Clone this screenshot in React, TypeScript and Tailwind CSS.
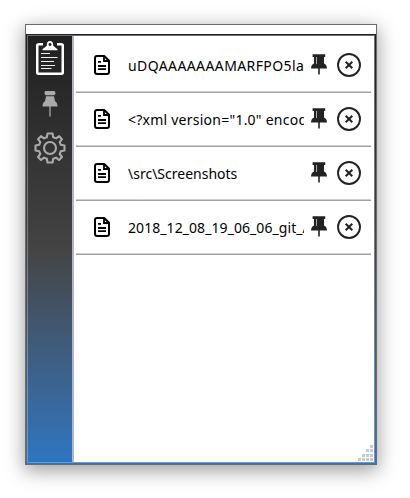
type Clip = { text: string; tracking: string };

const clips: Clip[] = [
  { text: 'uDQAAAAAAAMARFPO5la', tracking: 'tracking-[0.4px]' },
  { text: '<?xml version="1.0" encoding="utf-8"?>', tracking: 'tracking-[0.24px]' },
  { text: '\\src\\Screenshots', tracking: 'tracking-[0px]' },
  { text: '2018_12_08_19_06_06_git_Actions', tracking: 'tracking-[0.07px]' },
];

function ClipboardIcon() {
  return (
    <svg width="28" height="35" viewBox="0 0 28 35" className="block">
      <path d="M7 3.2H2.8Q1.2 3.2 1.2 4.8V31.2Q1.2 32.8 2.8 32.8H25.2Q26.8 32.8 26.8 31.2V4.8Q26.8 3.2 25.2 3.2H21" fill="none" stroke="#fff" strokeWidth="2.6" />
      <path fillRule="evenodd" d="M6.5 9.3V8.2L10.8 4.7Q10.5 0 14 0T17.2 4.7L21.5 8.2V9.3ZM14 2.1a1.5 1.5 0 1 0 .01 0Z" fill="#fff" />
      <path d="M5 12.5H14M5 16.5H21.5M5 20.5H18M5 24.5H19M5 27.5H15.5" stroke="#eee" strokeWidth="1.2" />
    </svg>
  );
}

function SidebarPin() {
  return (
    <svg width="16" height="26" viewBox="0 0 16 26" className="block">
      <path d="M4 0H12Q13.5 0 13.5 2T12 4.2H4Q2.5 4.2 2.5 2T4 0ZM4 5.2H12L13 10.2Q15.5 11.5 15.5 15.5H.5Q.5 11.5 3 10.2Z" fill="#aaa" />
      <path d="M8 15V25.5" stroke="#aaa" strokeWidth="1.3" />
    </svg>
  );
}

function Gear() {
  return (
    <svg width="32" height="32" viewBox="0 0 32 32" className="block" fill="none" stroke="#aaa" strokeWidth="2.1">
      <path strokeLinejoin="round" d="M13.5 1.5H18.5L19.2 5.2L22.1 6.4L25.2 4.2L28 7.2L25.7 10.1L26.8 12.8L30.5 13.5V18.5L26.8 19.2L25.7 22L28 25L25 28L22 25.6L19.2 26.8L18.5 30.5H13.5L12.8 26.8L10 25.6L7 28L4 25L6.3 22L5.2 19.2L1.5 18.5V13.5L5.2 12.8L6.3 10.1L4 7.2L7 4.2L10 6.4L12.8 5.2Z" />
      <circle cx="16" cy="16" r="6" />
    </svg>
  );
}

function DocIcon() {
  return (
    <svg width="16" height="20" viewBox="0 0 16 20" className="block shrink-0">
      <path d="M3 1H10.2L15 5.8V17Q15 19 13 19H3Q1 19 1 17V3Q1 1 3 1Z" fill="none" stroke="#000" strokeWidth="2" strokeLinejoin="round" />
      <path d="M10 1V6H15" fill="none" stroke="#000" strokeWidth="1.8" />
      <path d="M4 6.8H7M4 11H12M4 14.2H12" stroke="#000" strokeWidth="1.8" />
    </svg>
  );
}

function PinIcon() {
  return (
    <svg width="16" height="21" viewBox="0 0 16 21" className="block shrink-0">
      <path d="M1.6 .2H14.2V3H13V9.4Q15.8 10.4 16 14.4H0Q.2 10.4 3 9.4V3H1.6Z" fill="#222" />
      <path d="M5.5 3V10" stroke="#aaa" strokeWidth="1" />
      <path d="M8 13V20.5" stroke="#222" strokeWidth="1.6" />
    </svg>
  );
}

function CloseIcon() {
  return (
    <svg width="24" height="24" viewBox="0 0 24 24" className="block shrink-0" fill="none" stroke="#222">
      <circle cx="12" cy="12" r="11" strokeWidth="1.9" />
      <path d="M8.7 8.7L15.3 15.3M15.3 8.7L8.7 15.3" strokeWidth="2" />
    </svg>
  );
}

function Grip() {
  return (
    <svg width="17" height="17" viewBox="0 0 17 17" className="absolute right-0 bottom-0" fill="#c6cbdc">
      {[[13, 0], [9, 4], [13, 4], [5, 9], [9, 9], [13, 9], [1, 13], [5, 13], [9, 13], [13, 13]].map(([x, y]) => (
        <rect key={`${x}-${y}`} x={x} y={y} width="3" height="3" />
      ))}
    </svg>
  );
}

export default function App() {
  return (
    <div className="h-[498px] w-[410px] overflow-hidden bg-white pt-6 pl-[25px]">
      <div className="flex h-[441px] w-[352px] flex-col border border-[#6b6b6b] bg-white shadow-[0_5px_18px_1px_rgba(0,0,0,0.38)]">
        <div className="h-[9px] shrink-0 bg-white" />
        <div className="flex min-h-0 flex-1 bg-linear-to-b from-[#202020] via-[#444] via-50% to-[#2d76c2] p-px">
          <div className="flex min-w-0 flex-1 border border-[#b5bdcb]/50">
            <nav className="flex w-[44px] shrink-0 flex-col items-center pt-[5px]">
              <ClipboardIcon />
              <div className="mt-[15px]"><SidebarPin /></div>
              <div className="mt-[15px]"><Gear /></div>
            </nav>
            <main className="relative flex-1 overflow-hidden border-l-2 border-[#b4b6bf] bg-white pt-[3px] pr-[3px] pl-[2px]">
              {clips.map((clip) => (
                <div key={clip.text} className="flex h-[54px] items-center border-b border-[#a2a2a2] pb-[2px] pl-[18px] shadow-[inset_0_-1px_0_#d0d0d0]">
                  <DocIcon />
                  <div className={`mt-[2px] ml-[18px] w-[176px] overflow-hidden font-['Noto_Sans',sans-serif] text-[14px] leading-5 whitespace-nowrap text-black ${clip.tracking}`}>
                    {clip.text}
                  </div>
                  <div className="ml-[7px]"><PinIcon /></div>
                  <div className="ml-[10px]"><CloseIcon /></div>
                </div>
              ))}
              <Grip />
            </main>
          </div>
        </div>
      </div>
    </div>
  );
}
